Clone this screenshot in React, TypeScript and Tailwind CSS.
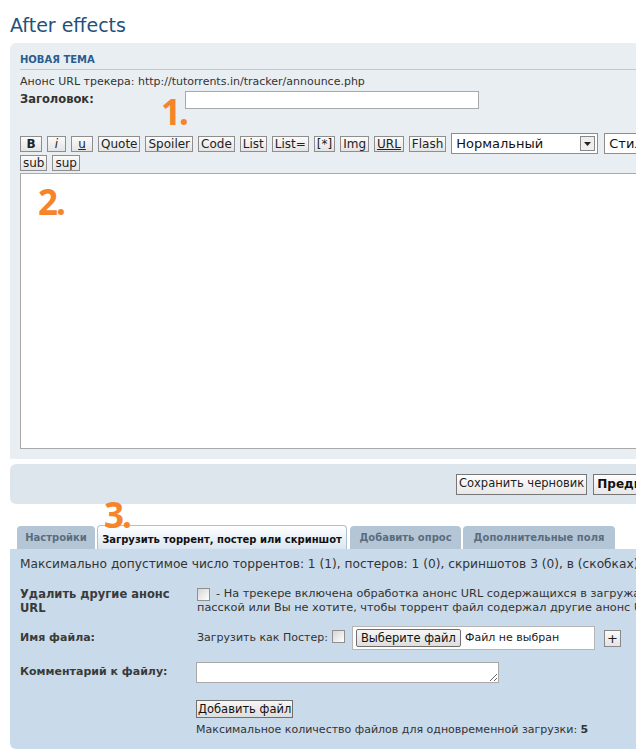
import React from "react";

const font = { fontFamily: '"DejaVu Sans", Verdana, sans-serif' };

function ToolBtn({ label, className = "" }: { label: string; className?: string }) {
  return (
    <button
      className={
        "h-[16px] px-[2px] border border-[#8e8e8e] bg-gradient-to-b from-[#fbfbfb] to-[#e4e4e4] text-[12px] leading-[14px] text-[#222] " +
        className
      }
    >
      {label}
    </button>
  );
}

function Mark({ n, className }: { n: string; className: string }) {
  return (
    <span
      className={"absolute text-[35px] font-bold leading-none text-[#f6842b] tracking-[-2px] " + className}
      style={{ fontFamily: '"Noto Sans", sans-serif' }}
    >
      {n}
    </span>
  );
}

function Check() {
  return <span className="inline-block h-[13px] w-[13px] shrink-0 border border-[#8f8f8f] bg-gradient-to-br from-[#d6d6d6] to-white" />;
}

const buttons = [
  { l: "B", c: "w-[22px] font-bold" },
  { l: "i", c: "w-[19px] italic" },
  { l: "u", c: "w-[22px] underline" },
  { l: "Quote", c: "" },
  { l: "Spoiler", c: "" },
  { l: "Code", c: "" },
  { l: "List", c: "" },
  { l: "List=", c: "" },
  { l: "[*]", c: "" },
  { l: "Img", c: "" },
  { l: "URL", c: "underline" },
  { l: "Flash", c: "" },
];

export default function App() {
  return (
    <div className="relative w-[636px] h-[751px] overflow-hidden bg-white" style={font}>
      <div className="w-[800px] pl-[10px]">
        <h1 className="pt-[13px] h-[43px] text-[19px] leading-[24px] text-[#24517c]">After effects</h1>

        {/* new topic form */}
        <div className="rounded-tl-[6px] bg-[#e9eef2] px-[10px] pt-[11px] pb-[10px]">
          <div className="border-b border-[#c3c8cd] pb-[3px] text-[10px] font-bold leading-[12px] text-[#2a5d90]">
            НОВАЯ ТЕМА
          </div>
          <div className="mt-[5px] text-[11px] leading-[13px] text-[#333]">
            Анонс URL трекера: http://tutorrents.in/tracker/announce.php
          </div>
          <div className="mt-[3px] flex h-[18px] items-start">
            <span className="w-[165px] pt-[1px] text-[11.5px] font-bold leading-[14px] text-[#333]">Заголовок:</span>
            <input className="h-[18px] w-[294px] border border-[#a9a9a9] bg-white" />
          </div>

          <div className="mt-[24px] flex h-[21px] items-center gap-[5px]">
            {buttons.map((b) => (
              <ToolBtn key={b.l} label={b.l} className={b.c} />
            ))}
            <div className="flex h-[21px] w-[147px] shrink-0 items-center justify-between border border-[#8e8e8e] bg-white pl-[4px] pr-[2px]">
              <span className="text-[13px] leading-[16px] text-[#111]">Нормальный</span>
              <span className="flex h-[15px] w-[15px] items-center justify-center border border-[#888] bg-[#eee]">
                <svg width="7" height="4" viewBox="0 0 7 4">
                  <path d="M0 0h7L3.5 4z" fill="#222" />
                </svg>
              </span>
            </div>
            <div className="ml-[1px] flex h-[21px] w-[120px] shrink-0 items-center border border-[#8e8e8e] bg-white pl-[4px]">
              <span className="text-[13px] leading-[16px] text-[#111]">Стиль шрифта</span>
            </div>
          </div>
          <div className="mt-[1px] flex h-[15px] gap-[5px]">
            <ToolBtn label="sub" className="h-[15px]" />
            <ToolBtn label="sup" className="h-[15px]" />
          </div>

          <textarea className="mt-[3px] block h-[276px] w-[700px] resize-none border border-[#a9a9a9] bg-white" />
        </div>

        {/* action bar */}
        <div className="mt-[5px] flex h-[40px] items-center rounded-l-[6px] bg-[#dde5ed] pl-[446px]">
          <button className="h-[21px] whitespace-nowrap border border-[#777] bg-gradient-to-b from-[#fdfdfd] to-[#e8e8e8] px-[2px] text-[11.5px] text-[#222]">
            Сохранить черновик
          </button>
          <button className="ml-[6px] h-[21px] whitespace-nowrap border border-[#777] bg-gradient-to-b from-[#fdfdfd] to-[#e8e8e8] px-[3px] text-[12px] font-bold text-[#111]">
            Предпросмотр
          </button>
        </div>

        {/* tabs */}
        <div className="mt-[21px] flex h-[24px] items-end pl-[7px]">
          <div className="flex h-[23px] w-[78px] items-center justify-center rounded-t-[4px] bg-[#b4c6d6] text-[10px] font-bold text-[#5a6d7e]">
            Настройки
          </div>
          <div className="ml-[2px] flex h-[24px] w-[250px] items-center justify-center rounded-t-[4px] border border-b-0 border-[#b0c2d2] bg-gradient-to-b from-white to-[#dae6f2] pt-[3px] text-[10px] font-bold text-[#111]">
            Загрузить торрент, постер или скриншот
          </div>
          <div className="ml-[3px] flex h-[23px] w-[111px] items-center justify-center rounded-t-[4px] bg-[#b4c6d6] text-[10px] font-bold text-[#5a6d7e]">
            Добавить опрос
          </div>
          <div className="ml-[2px] flex h-[23px] w-[152px] items-center justify-center rounded-t-[4px] bg-[#b4c6d6] text-[10px] font-bold text-[#5a6d7e]">
            Дополнительные поля
          </div>
        </div>

        {/* upload panel */}
        <div className="h-[200px] rounded-bl-[6px] bg-[#c9daea] px-[10px] pt-[8px] text-[#333]">
          <div className="h-[15px] whitespace-nowrap text-[12.2px] leading-[15px]">
            Максимально допустимое число торрентов: 1 (1), постеров: 1 (0), скриншотов 3 (0), в (скобках) указано число
          </div>

          <div className="mt-[15px] flex h-[28px]">
            <div className="w-[177px] shrink-0 text-[11.5px] font-bold leading-[14px] text-[#3a3a3a]">
              Удалить другие анонс
              <br />
              URL
            </div>
            <div className="whitespace-nowrap text-[11.3px] leading-[14px]">
              <div className="flex items-center gap-[6px]">
                <Check />
                <span>- На трекере включена обработка анонс URL содержащихся в загружаемых торрент файлах</span>
              </div>
              <div>пасской или Вы не хотите, чтобы торрент файл содержал другие анонс URL</div>
            </div>
          </div>

          <div className="mt-[11px] flex h-[24px] items-center whitespace-nowrap">
            <div className="w-[177px] shrink-0 text-[11px] font-bold text-[#3a3a3a]">Имя файла:</div>
            <span className="text-[11px]">Загрузить как Постер:</span>
            <span className="ml-[4px]">
              <Check />
            </span>
            <div className="ml-[7px] flex h-[24px] w-[243px] shrink-0 items-center border border-[#b5b5b5] bg-white pl-[3px]">
              <button className="h-[18px] rounded-[2px] border border-[#707070] bg-gradient-to-b from-[#f6f6f6] to-[#dedede] px-[4px] text-[11.5px] leading-[14px] text-[#111]">
                Выберите файл
              </button>
              <span className="ml-[4px] text-[11px] text-[#222]">Файл не выбран</span>
            </div>
            <button className="ml-[9px] flex h-[17px] w-[17px] items-center justify-center border border-[#888] bg-gradient-to-b from-[#fafafa] to-[#e4e4e4] text-[13px] leading-none text-[#222]">
              +
            </button>
          </div>

          <div className="mt-[12px] flex h-[21px] items-center">
            <div className="w-[176px] shrink-0 text-[11px] font-bold text-[#3a3a3a]">Комментарий к файлу:</div>
            <textarea className="block h-[21px] w-[303px] resize-y border border-[#a9a9a9] bg-white" />
          </div>

          <div className="mt-[13px] h-[18px] pl-[176px]">
            <button className="h-[18px] whitespace-nowrap border border-[#707070] bg-gradient-to-b from-[#f6f6f6] to-[#dedede] px-[1px] text-[11.5px] leading-[14px] text-[#111]">
              Добавить файл
            </button>
          </div>

          <div className="mt-[9px] whitespace-nowrap pl-[176px] text-[11px] leading-[14px] text-[#333]">
            Максимальное количество файлов для одновременной загрузки: <b>5</b>
          </div>
        </div>
      </div>

      <Mark n="1." className="left-[161px] top-[94px]" />
      <Mark n="2." className="left-[38px] top-[184px]" />
      <Mark n="3." className="left-[104px] top-[497px]" />
    </div>
  );
}
